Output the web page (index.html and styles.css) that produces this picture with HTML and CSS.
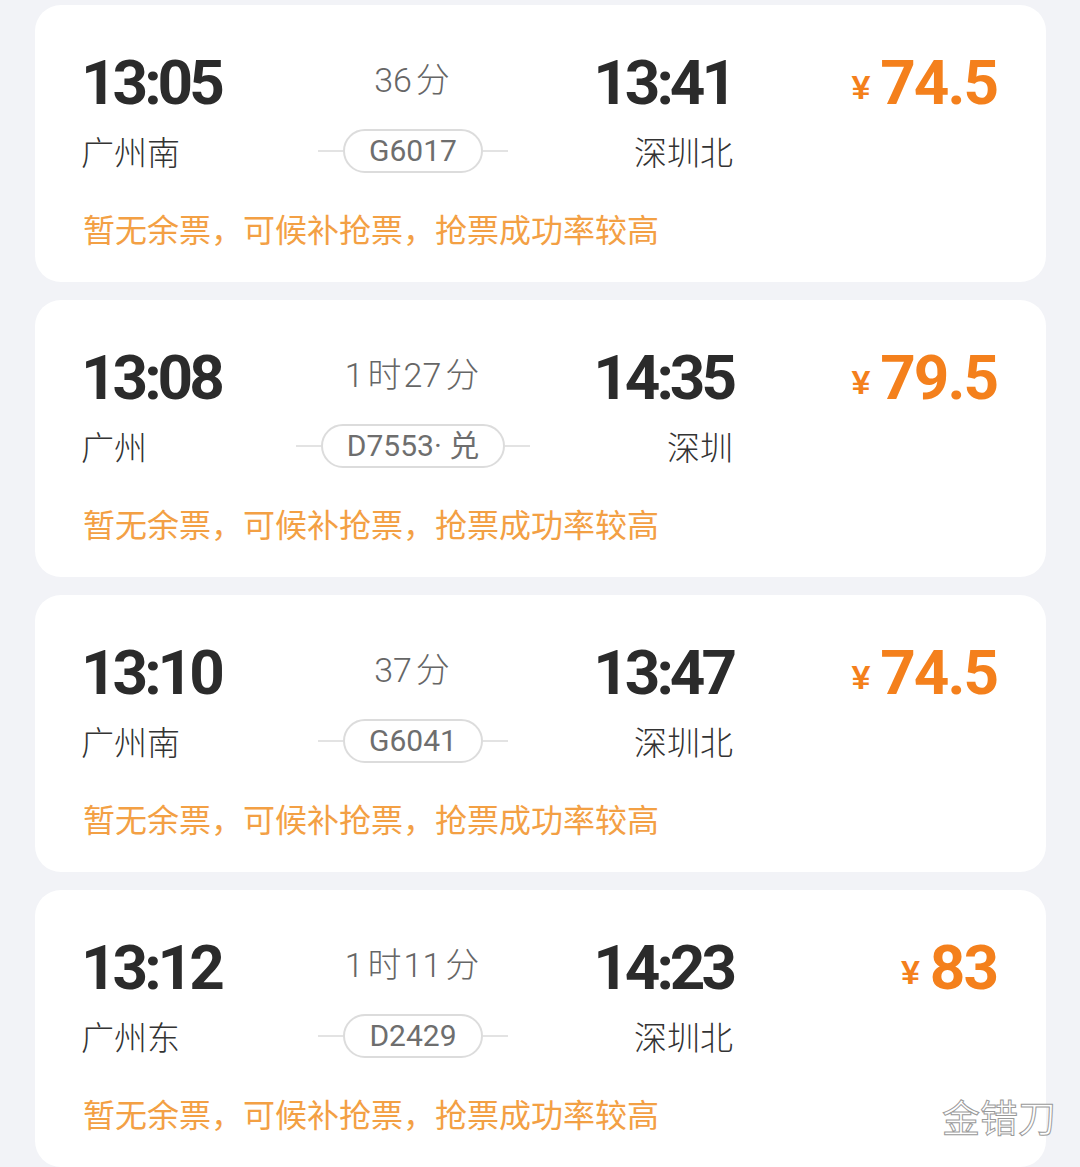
FILE: index.html
```html
<!DOCTYPE html>
<html lang="zh-CN">
<head>
    <meta charset="UTF-8">
    <meta name="viewport" content="width=device-width, initial-scale=1.0">
    <title>车次列表</title>
    <link rel="stylesheet" href="styles.css">
</head>
<body>
    <div class="list">
        <div class="card">
            <div class="row">
                <div class="time">13:05</div>
                <div class="duration">36<span class="cn">分</span></div>
                <div class="time arrive">13:41</div>
                <div class="price"><span class="yen">¥</span>74.5</div>
                <div class="station">广州南</div>
                <div class="train"><i class="line"></i><span class="pill">G6017</span><i class="line"></i></div>
                <div class="station arrive">深圳北</div>
            </div>
            <p class="note">暂无余票，可候补抢票，抢票成功率较高</p>
        </div>

        <div class="card">
            <div class="row">
                <div class="time">13:08</div>
                <div class="duration">1<span class="cn">时</span>27<span class="cn">分</span></div>
                <div class="time arrive">14:35</div>
                <div class="price"><span class="yen">¥</span>79.5</div>
                <div class="station">广州</div>
                <div class="train"><i class="line"></i><span class="pill">D7553·&nbsp;兑</span><i class="line"></i></div>
                <div class="station arrive">深圳</div>
            </div>
            <p class="note">暂无余票，可候补抢票，抢票成功率较高</p>
        </div>

        <div class="card">
            <div class="row">
                <div class="time">13:10</div>
                <div class="duration">37<span class="cn">分</span></div>
                <div class="time arrive">13:47</div>
                <div class="price"><span class="yen">¥</span>74.5</div>
                <div class="station">广州南</div>
                <div class="train"><i class="line"></i><span class="pill">G6041</span><i class="line"></i></div>
                <div class="station arrive">深圳北</div>
            </div>
            <p class="note">暂无余票，可候补抢票，抢票成功率较高</p>
        </div>

        <div class="card">
            <div class="row">
                <div class="time">13:12</div>
                <div class="duration">1<span class="cn">时</span>11<span class="cn">分</span></div>
                <div class="time arrive">14:23</div>
                <div class="price"><span class="yen">¥</span>83</div>
                <div class="station">广州东</div>
                <div class="train"><i class="line"></i><span class="pill">D2429</span><i class="line"></i></div>
                <div class="station arrive">深圳北</div>
            </div>
            <p class="note">暂无余票，可候补抢票，抢票成功率较高</p>
        </div>
    </div>
    <div class="watermark">金错刀</div>
</body>
</html>
```

FILE: styles.css
```css
body {
    margin: 0;
    background-color: #f2f3f7;
    font-family: Roboto, "Noto Sans CJK SC", sans-serif;
    height: 1167px;
    overflow: hidden;
    position: relative;
}
.list {
    display: flex;
    flex-direction: column;
    gap: 18px;
    padding: 5px 34px 0 35px;
}
.card {
    background: #fff;
    border-radius: 26px;
    padding: 47px 49px 32px 46px;
}
.row {
    display: grid;
    grid-template-columns: 202px 260px 190px 1fr;
    grid-template-rows: 62px 44px;
    row-gap: 15px;
}
.time {
    font-size: 62px;
    line-height: 62px;
    font-weight: 700;
    color: #2b2b2b;
    letter-spacing: -4px;
}
.time.arrive {
    text-align: right;
}
.duration {
    align-self: start;
    margin-top: 4px;
    text-align: center;
    font-size: 34px;
    line-height: 44px;
    font-weight: 300;
    color: #666;
}
.duration .cn {
    font-family: "Noto Sans CJK SC", sans-serif;
    margin-left: 4px;
    margin-right: 2px;
}
.price {
    text-align: right;
    font-size: 62px;
    line-height: 62px;
    font-weight: 700;
    color: #f4801c;
    letter-spacing: -2px;
}
.yen {
    font-family: "Liberation Sans", sans-serif;
    font-size: 34px;
    letter-spacing: 0;
    margin-right: 10px;
    vertical-align: 5px;
}
.station {
    font-family: "Noto Sans CJK SC", sans-serif;
    font-size: 33px;
    line-height: 44px;
    font-weight: 300;
    color: #333;
}
.station.arrive {
    text-align: right;
}
.train {
    display: flex;
    align-items: center;
    justify-content: center;
}
.line {
    width: 25px;
    height: 2px;
    background: #e3e3e3;
}
.pill {
    height: 40px;
    line-height: 40px;
    padding: 0 24px;
    border: 2px solid #dcdcdc;
    border-radius: 22px;
    font-size: 30px;
    color: #6e6e6e;
    white-space: nowrap;
}
.note {
    margin: 33px 0 0 2px;
    font-family: "Noto Sans CJK SC", sans-serif;
    font-size: 32px;
    line-height: 44px;
    color: #f3a044;
}
.watermark {
    position: absolute;
    right: 24px;
    bottom: 24px;
    font-family: "Noto Sans CJK SC", sans-serif;
    font-size: 38px;
    color: #fff;
    -webkit-text-stroke: 1px #9a9a9a;
}
```
